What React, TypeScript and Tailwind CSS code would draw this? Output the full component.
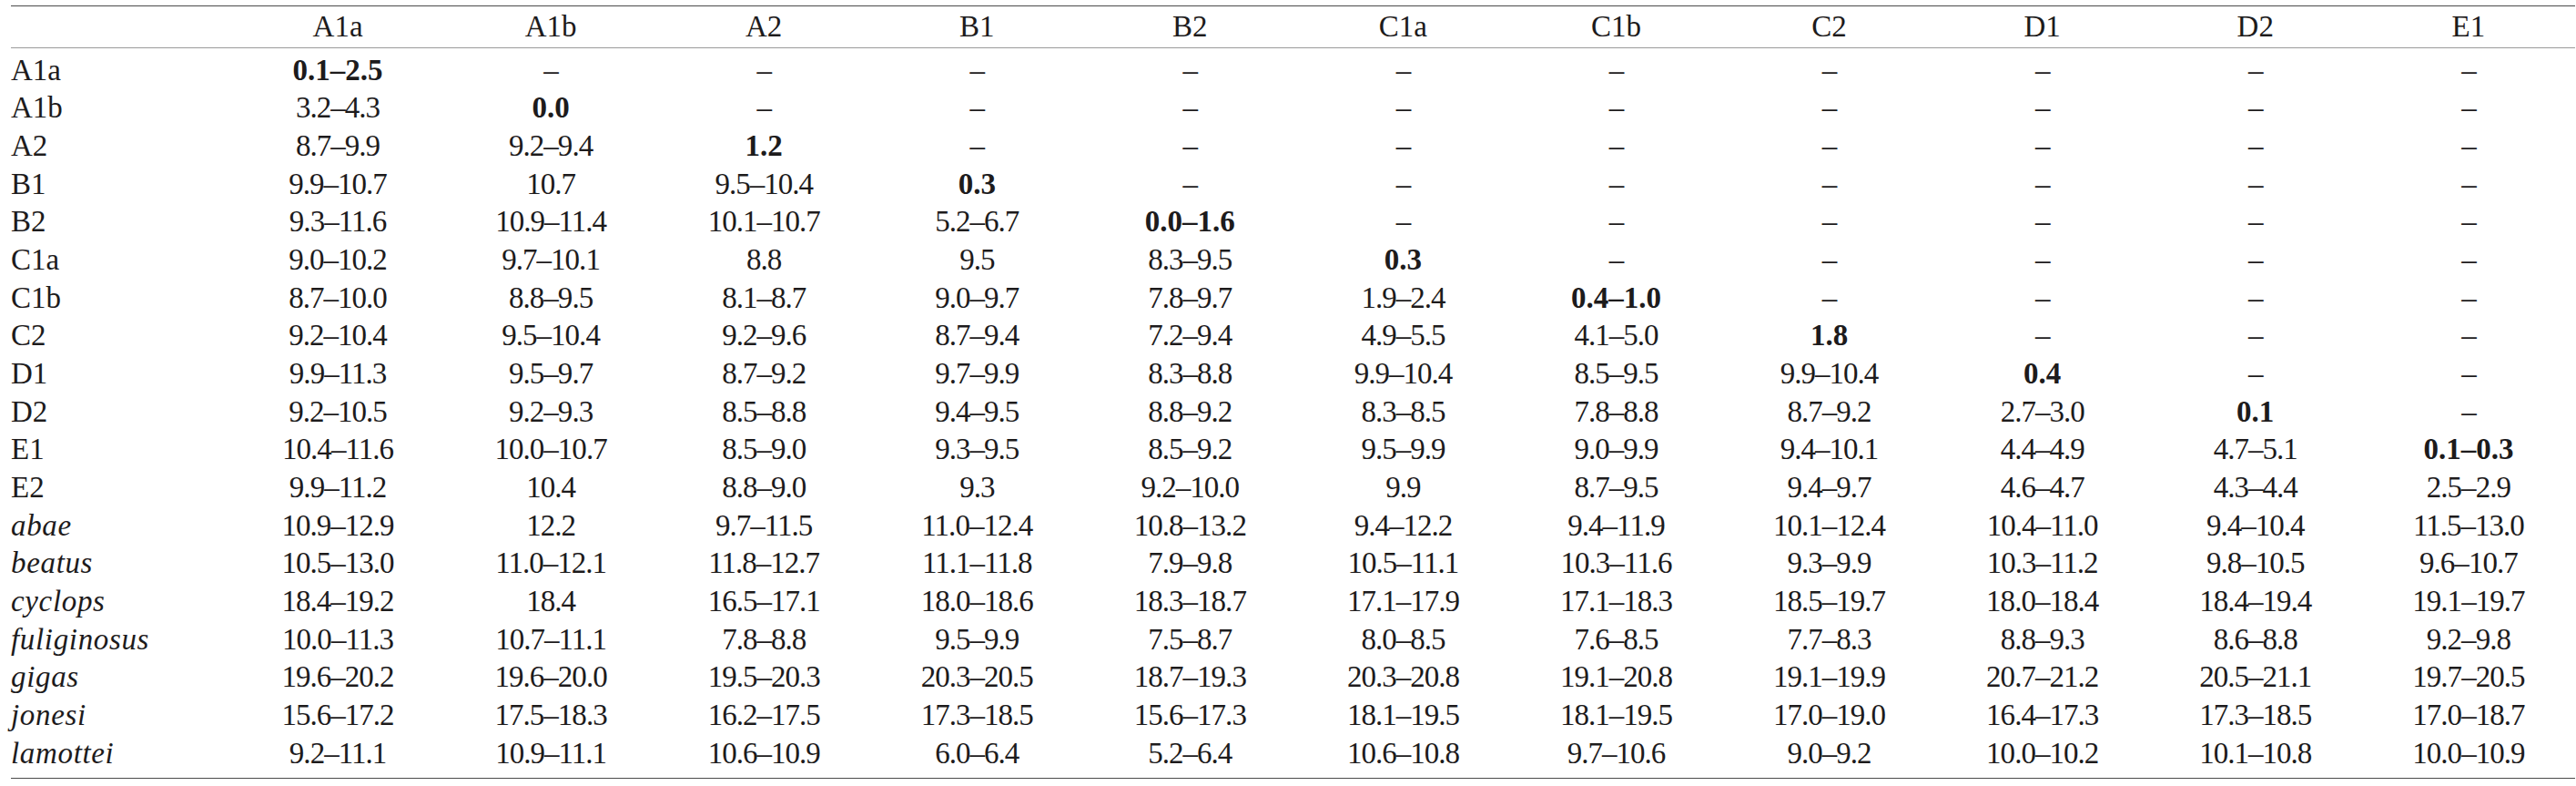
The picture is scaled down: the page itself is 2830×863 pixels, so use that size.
const COLUMNS = ['A1a', 'A1b', 'A2', 'B1', 'B2', 'C1a', 'C1b', 'C2', 'D1', 'D2', 'E1'];

type Row = { label: string; species?: boolean; values: string[] };

const D = '–';

const ROWS: Row[] = [
  { label: 'A1a', values: ['0.1–2.5', D, D, D, D, D, D, D, D, D, D] },
  { label: 'A1b', values: ['3.2–4.3', '0.0', D, D, D, D, D, D, D, D, D] },
  { label: 'A2', values: ['8.7–9.9', '9.2–9.4', '1.2', D, D, D, D, D, D, D, D] },
  { label: 'B1', values: ['9.9–10.7', '10.7', '9.5–10.4', '0.3', D, D, D, D, D, D, D] },
  { label: 'B2', values: ['9.3–11.6', '10.9–11.4', '10.1–10.7', '5.2–6.7', '0.0–1.6', D, D, D, D, D, D] },
  { label: 'C1a', values: ['9.0–10.2', '9.7–10.1', '8.8', '9.5', '8.3–9.5', '0.3', D, D, D, D, D] },
  { label: 'C1b', values: ['8.7–10.0', '8.8–9.5', '8.1–8.7', '9.0–9.7', '7.8–9.7', '1.9–2.4', '0.4–1.0', D, D, D, D] },
  { label: 'C2', values: ['9.2–10.4', '9.5–10.4', '9.2–9.6', '8.7–9.4', '7.2–9.4', '4.9–5.5', '4.1–5.0', '1.8', D, D, D] },
  { label: 'D1', values: ['9.9–11.3', '9.5–9.7', '8.7–9.2', '9.7–9.9', '8.3–8.8', '9.9–10.4', '8.5–9.5', '9.9–10.4', '0.4', D, D] },
  { label: 'D2', values: ['9.2–10.5', '9.2–9.3', '8.5–8.8', '9.4–9.5', '8.8–9.2', '8.3–8.5', '7.8–8.8', '8.7–9.2', '2.7–3.0', '0.1', D] },
  { label: 'E1', values: ['10.4–11.6', '10.0–10.7', '8.5–9.0', '9.3–9.5', '8.5–9.2', '9.5–9.9', '9.0–9.9', '9.4–10.1', '4.4–4.9', '4.7–5.1', '0.1–0.3'] },
  { label: 'E2', values: ['9.9–11.2', '10.4', '8.8–9.0', '9.3', '9.2–10.0', '9.9', '8.7–9.5', '9.4–9.7', '4.6–4.7', '4.3–4.4', '2.5–2.9'] },
  { label: 'abae', species: true, values: ['10.9–12.9', '12.2', '9.7–11.5', '11.0–12.4', '10.8–13.2', '9.4–12.2', '9.4–11.9', '10.1–12.4', '10.4–11.0', '9.4–10.4', '11.5–13.0'] },
  { label: 'beatus', species: true, values: ['10.5–13.0', '11.0–12.1', '11.8–12.7', '11.1–11.8', '7.9–9.8', '10.5–11.1', '10.3–11.6', '9.3–9.9', '10.3–11.2', '9.8–10.5', '9.6–10.7'] },
  { label: 'cyclops', species: true, values: ['18.4–19.2', '18.4', '16.5–17.1', '18.0–18.6', '18.3–18.7', '17.1–17.9', '17.1–18.3', '18.5–19.7', '18.0–18.4', '18.4–19.4', '19.1–19.7'] },
  { label: 'fuliginosus', species: true, values: ['10.0–11.3', '10.7–11.1', '7.8–8.8', '9.5–9.9', '7.5–8.7', '8.0–8.5', '7.6–8.5', '7.7–8.3', '8.8–9.3', '8.6–8.8', '9.2–9.8'] },
  { label: 'gigas', species: true, values: ['19.6–20.2', '19.6–20.0', '19.5–20.3', '20.3–20.5', '18.7–19.3', '20.3–20.8', '19.1–20.8', '19.1–19.9', '20.7–21.2', '20.5–21.1', '19.7–20.5'] },
  { label: 'jonesi', species: true, values: ['15.6–17.2', '17.5–18.3', '16.2–17.5', '17.3–18.5', '15.6–17.3', '18.1–19.5', '18.1–19.5', '17.0–19.0', '16.4–17.3', '17.3–18.5', '17.0–18.7'] },
  { label: 'lamottei', species: true, values: ['9.2–11.1', '10.9–11.1', '10.6–10.9', '6.0–6.4', '5.2–6.4', '10.6–10.8', '9.7–10.6', '9.0–9.2', '10.0–10.2', '10.1–10.8', '10.0–10.9'] },
];

export default function App() {
  return (
    <div className="min-h-[863px] bg-white pt-[6px] pl-[12px] text-[#1d1b1c] [font-family:'Liberation_Serif','Times_New_Roman',serif]">
      <table className="w-[2817px] table-fixed border-collapse text-[33px] leading-[41.67px]">
        <colgroup>
          <col className="w-[242px]" />
          {COLUMNS.map((c) => (
            <col key={c} />
          ))}
        </colgroup>
        <thead>
          <tr className="border-t-[1.5px] border-b-[1.5px] border-t-[#4a4a4a] border-b-[#9a9a9a]">
            <th className="pt-[2px] pb-[1px] text-left font-normal" />
            {COLUMNS.map((c) => (
              <th key={c} className="pt-[2px] pb-[1px] text-center font-normal">
                {c}
              </th>
            ))}
          </tr>
        </thead>
        <tbody className="border-b-[1.5px] border-b-[#4a4a4a]">
          {ROWS.map((row, r) => {
            // first and last rows carry the breathing room next to the rules
            const pad = r === 0 ? 'pt-[4px]' : r === ROWS.length - 1 ? 'pb-[6px]' : '';
            return (
              <tr key={row.label}>
                <td className={`p-0 text-left ${row.species ? 'italic tracking-[0.02em]' : ''} ${pad}`}>
                  {row.label}
                </td>
                {row.values.map((v, i) => (
                  <td
                    key={i}
                    className={`p-0 text-center ${i === r ? 'font-bold' : 'tracking-[-0.03em]'} ${pad}`}
                  >
                    {v}
                  </td>
                ))}
              </tr>
            );
          })}
        </tbody>
      </table>
    </div>
  );
}
